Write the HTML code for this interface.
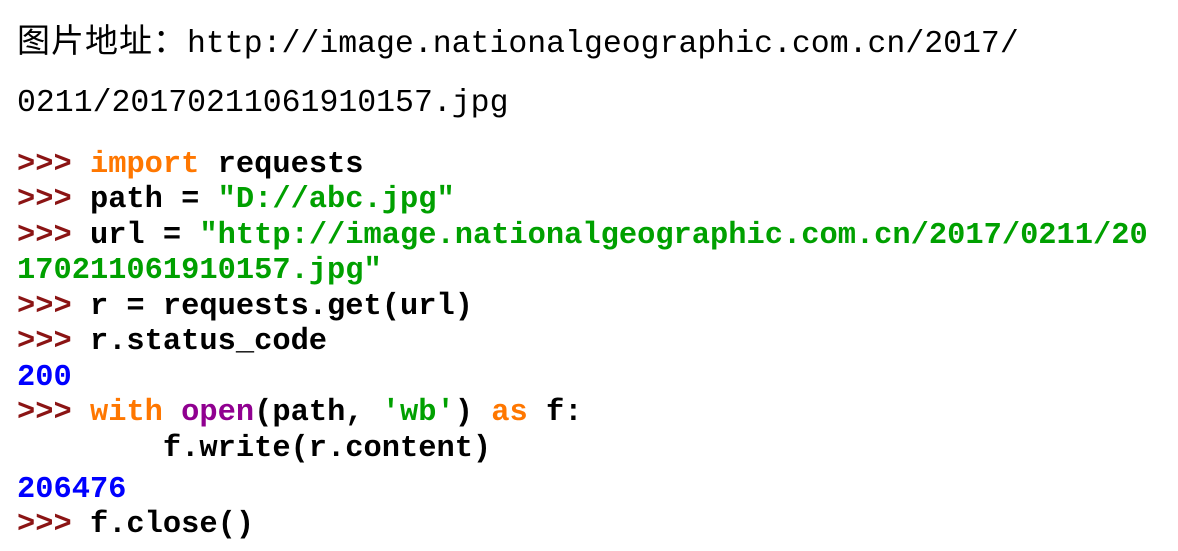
<!DOCTYPE html>
<html><head><meta charset="utf-8"><style>
body{margin:0;width:1178px;height:551px;background:#fff;overflow:hidden;position:relative}
.h{position:absolute;left:17px;font-family:"Liberation Mono","Noto Sans CJK SC",monospace;font-size:31.5px;color:#000;white-space:pre;line-height:40px}
.h .c{font-family:"Noto Sans CJK SC",sans-serif;font-size:33px;letter-spacing:1px}
.l{position:absolute;left:17px;font-family:"Liberation Mono",monospace;font-weight:bold;font-size:30.4px;line-height:36px;white-space:pre;color:#000}
.p{color:#8b1414}.k{color:#ff7700}.s{color:#00a000}.n{color:#0000ff}.b{color:#900090}
</style></head><body>
<div class="h" style="top:18px"><span class="c">图片地址：</span>http://image.nationalgeographic.com.cn/2017/</div>
<div class="h" style="top:84px">0211/20170211061910157.jpg</div>
<div class="l" style="top:147px"><span class="p">&gt;&gt;&gt;</span> <span class="k">import</span> requests</div>
<div class="l" style="top:182px"><span class="p">&gt;&gt;&gt;</span> path = <span class="s">"D://abc.jpg"</span></div>
<div class="l" style="top:218px"><span class="p">&gt;&gt;&gt;</span> url = <span class="s">"http://image.nationalgeographic.com.cn/2017/0211/20</span></div>
<div class="l" style="top:253px"><span class="s">170211061910157.jpg"</span></div>
<div class="l" style="top:289px"><span class="p">&gt;&gt;&gt;</span> r = requests.get(url)</div>
<div class="l" style="top:324px"><span class="p">&gt;&gt;&gt;</span> r.status_code</div>
<div class="l" style="top:360px"><span class="n">200</span></div>
<div class="l" style="top:395px"><span class="p">&gt;&gt;&gt;</span> <span class="k">with</span> <span class="b">open</span>(path, <span class="s">'wb'</span>) <span class="k">as</span> f:</div>
<div class="l" style="top:431px">        f.write(r.content)</div>
<div class="l" style="top:472px"><span class="n">206476</span></div>
<div class="l" style="top:507px"><span class="p">&gt;&gt;&gt;</span> f.close()</div>
</body></html>
